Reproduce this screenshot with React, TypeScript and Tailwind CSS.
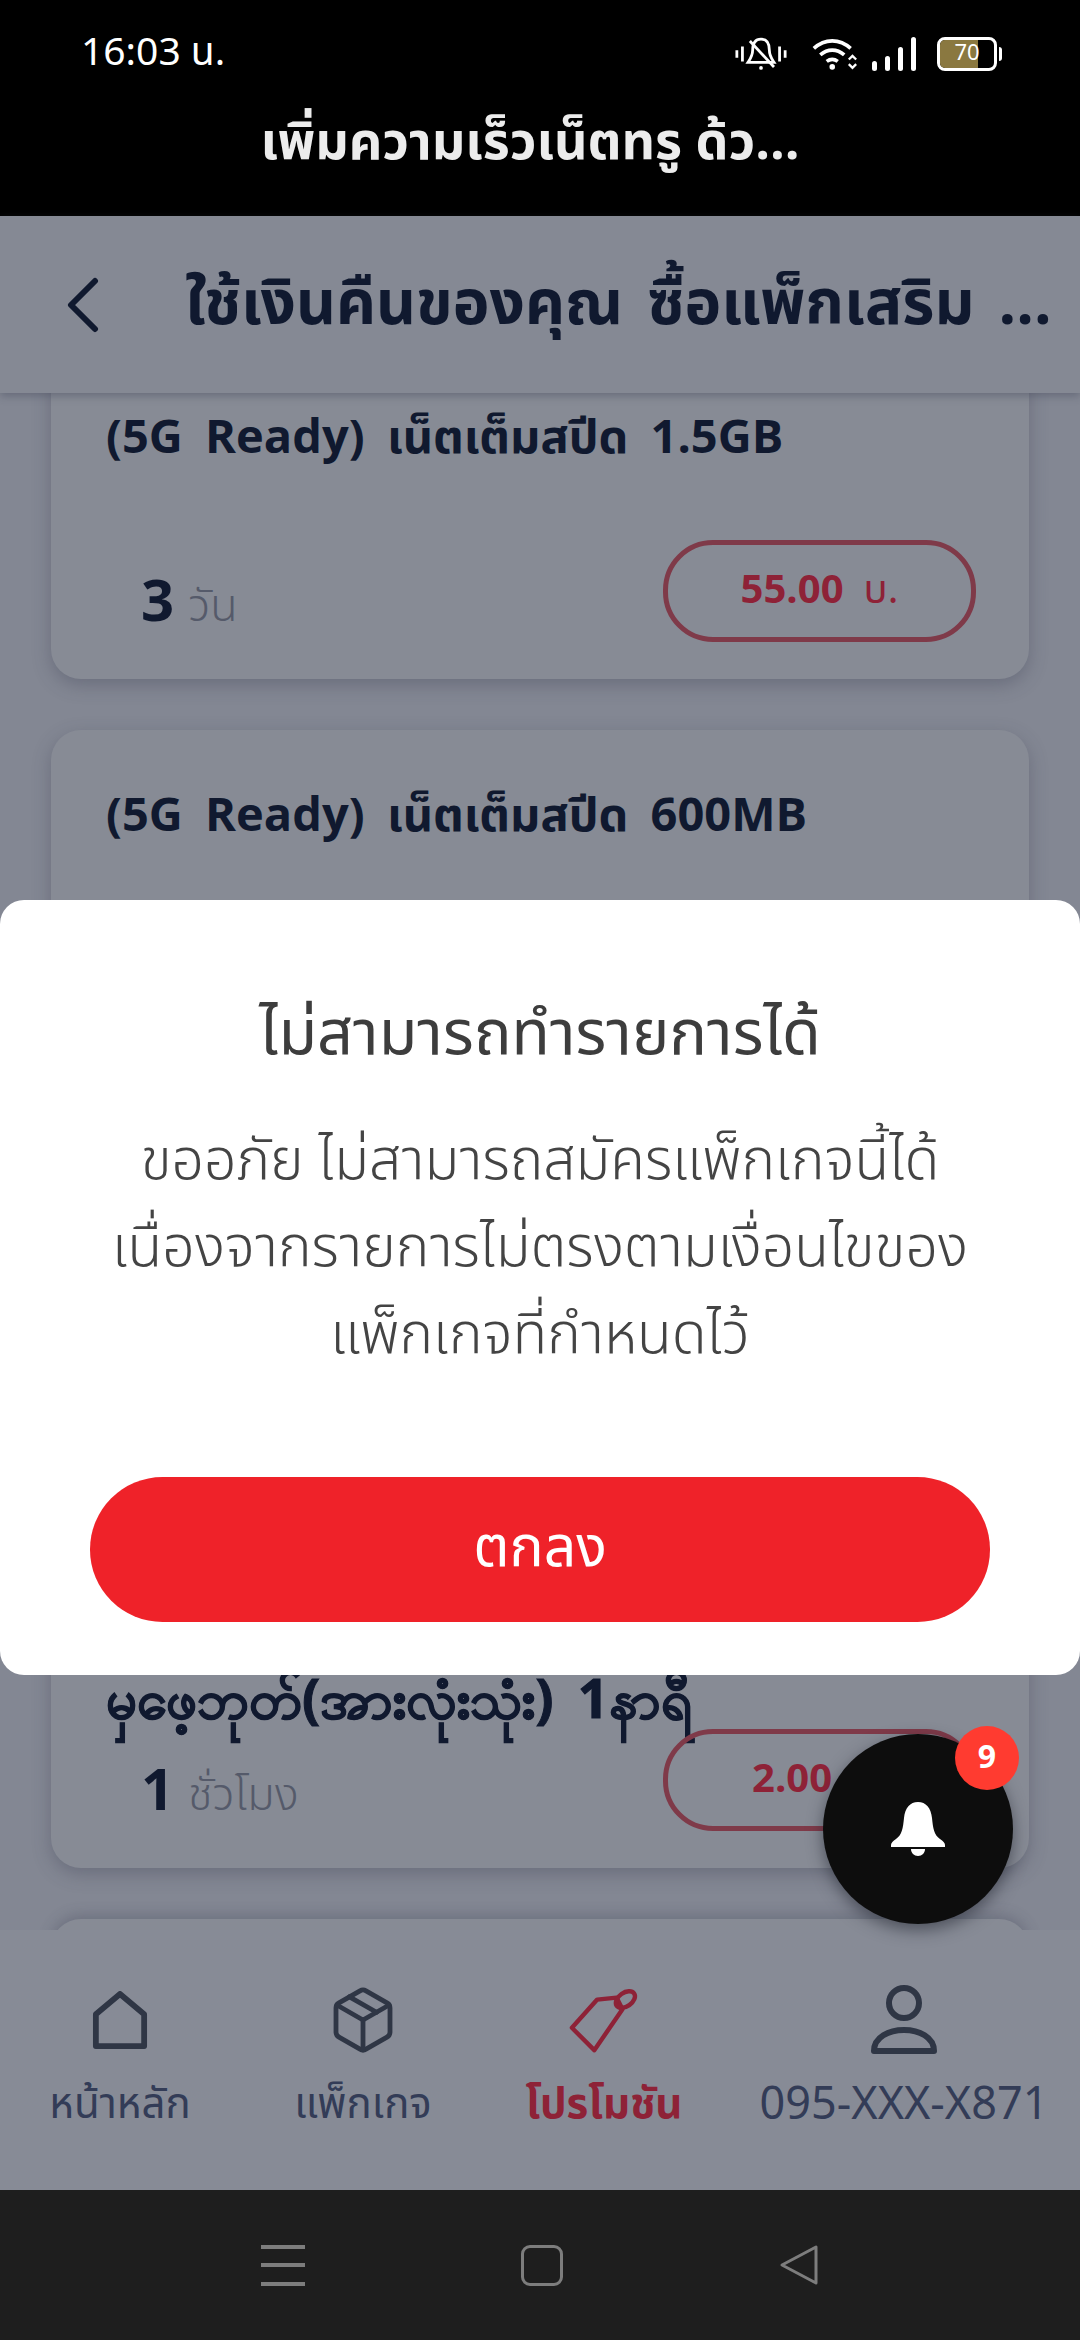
import React from 'react';
import { Package } from 'lucide-react';

const thai = 'font-["Noto_Sans_Thai","Noto_Sans","Open_Sans","Liberation_Sans",sans-serif]';

const PlanCard = ({ title, qty, unit, price, className = '', titleClassName = 'text-[47px]' }: { title: string; qty: string; unit: string; price: string; className?: string; titleClassName?: string }) => (
    <div className={`flex flex-col rounded-[30px] bg-[#878b95] pl-[55px] pr-[53px] pb-[37px] pt-[60px] shadow-[0_6px_18px_rgba(60,64,84,0.35)] ${className}`}>
        <div className={`leading-[54px] font-bold whitespace-nowrap text-[#10192f] [word-spacing:10px] ${titleClassName}`}>{title}</div>
        <div className="flex items-center justify-between">
            <div className="flex items-baseline gap-[14px] pl-[35px] pt-[24px]">
                <span className="text-[58px] leading-none font-bold text-[#10192f]">{qty}</span>
                <span className="text-[45px] leading-none font-light text-[#555a6a]">{unit}</span>
            </div>
            <div className="flex h-[102px] w-[313px] items-center justify-center gap-[20px] rounded-[50px] border-[5px] border-[#7f3a49] text-[40px] font-bold text-[#8e2237]">
                <span>{price}</span>
                <span className="font-normal">บ.</span>
            </div>
        </div>
    </div>
);

const NavItem = ({ label, icon, active = false, className = '' }: { label: string; icon: React.ReactNode; active?: boolean; className?: string }) => (
    <div className={`flex flex-col items-center ${className}`}>
        <div className="flex h-[72px] items-center justify-center">{icon}</div>
        <span className={`mt-[21px] text-[42px] leading-[56px] whitespace-nowrap ${active ? 'font-bold text-[#8e2237]' : 'text-[#333c57]'}`}>{label}</span>
    </div>
);

export default function App() {
    return (
        <div className={`relative flex h-[2340px] w-[1080px] flex-col overflow-hidden bg-[#838793] ${thai}`}>
            {/* status bar + app title */}
            <div className="flex h-[216px] shrink-0 flex-col bg-black text-white">
                <div className="flex h-[108px] items-center justify-between pl-[81px] pr-[78px]">
                    <span className="text-[39px] font-normal">16:03 น.</span>
                    <div className="flex items-center">
                        <svg width="52" height="40" viewBox="0 0 56 40" fill="none" stroke="white" strokeWidth="3">
                            <path d="M2 16v8M8 12v16M48 12v16M54 16v8" />
                            <path d="M28 4c-7 0-9 6-9 12 0 6-3 10-5 13h28c-2-3-5-7-5-13 0-6-2-12-9-12z" />
                            <path d="M16 6l26 28" />
                            <circle cx="28" cy="35" r="2" fill="white" stroke="none" />
                        </svg>
                        <svg className="ml-[25px]" width="46" height="36" viewBox="0 0 50 36" fill="none" stroke="white" strokeWidth="4">
                            <path d="M2 12c12-11 28-11 40 0M9 19c8-7 18-7 26 0M16 26c4-3 8-3 12 0" />
                            <circle cx="22" cy="32" r="3" fill="white" stroke="none" />
                            <path d="M40 24l4-4 4 4M40 29l4 4 4-4" strokeWidth="2.5" />
                        </svg>
                        <div className="ml-[14px] flex h-[34px] items-end gap-[8px]">
                            <span className="h-[10px] w-[5px] rounded-sm bg-white" />
                            <span className="h-[15px] w-[5px] rounded-sm bg-white" />
                            <span className="h-[24px] w-[5px] rounded-sm bg-white" />
                            <span className="h-[34px] w-[5px] rounded-sm bg-white" />
                        </div>
                        <div className="ml-[21px] flex items-center gap-[2px]">
                            <div className="relative h-[34px] w-[60px] overflow-hidden rounded-[8px] border-[3px] border-white">
                                <div className="h-full w-[70%] bg-[#8a7840]" />
                                <span className="absolute inset-0 flex items-center justify-center text-[22px] leading-none">70</span>
                            </div>
                            <span className="h-[14px] w-[3px] rounded-r bg-white" />
                        </div>
                    </div>
                </div>
                <div className="mt-[7px] pr-[20px] text-center text-[52px] leading-[56px] font-bold whitespace-nowrap text-[#ececec]">เพิ่มความเร็วเน็ตทรู ด้ว...</div>
            </div>

            {/* page header */}
            <div className="relative z-10 flex h-[177px] shrink-0 items-center bg-[#858994] pl-[66px] shadow-[0_3px_8px_rgba(60,64,84,0.4)]">
                <svg className="shrink-0" width="34" height="56" viewBox="0 0 34 56" fill="none" stroke="#10192f" strokeWidth="6" strokeLinecap="round" strokeLinejoin="round">
                    <path d="M29 4L5 28l24 24" />
                </svg>
                <div className="ml-[85px] text-[62px] leading-[72px] font-bold whitespace-nowrap text-[#10192f] [word-spacing:8px]">ใช้เงินคืนของคุณ ซื้อแพ็กเสริม ...</div>
            </div>

            {/* list, scrolled behind the header */}
            <div className="flex flex-1 flex-col gap-[51px] overflow-hidden px-[51px] -mt-[41px]">
                <PlanCard className="h-[327px] shrink-0 justify-between" title="(5G Ready) เน็ตเต็มสปีด 1.5GB" qty="3" unit="วัน" price="55.00" />
                <PlanCard className="h-[327px] shrink-0 justify-between" title="(5G Ready) เน็ตเต็มสปีด 600MB" qty="1" unit="วัน" price="25.00" />
                <div className="h-[327px] shrink-0 rounded-[30px] bg-[#878b95]" />
                <PlanCard className="h-[382px] shrink-0 justify-end" titleClassName="text-[54px] [-webkit-text-stroke:1px_#10192f]" title="မှဖေ့ဘုတ်(အားလုံးသုံး) 1နာရီ" qty="1" unit="ชั่วโมง" price="2.00" />
                <div className="h-[327px] shrink-0 rounded-[30px] bg-[#878b95] shadow-[0_-4px_14px_rgba(60,64,84,0.3)]" />
            </div>

            {/* bottom nav */}
            <div className="relative z-10 flex h-[260px] shrink-0 items-start bg-[#878b96] pt-[54px]">
                <NavItem className="w-[240px]" label="หน้าหลัก" icon={
                    <svg width="56" height="58" viewBox="0 0 58 60" fill="none" stroke="#2f3645" strokeWidth="6" strokeLinejoin="round">
                        <path d="M4 24L29 3l25 21v33H4z" />
                    </svg>
                } />
                <NavItem className="w-[246px]" label="แพ็กเกจ" icon={<Package size={72} color="#2f3645" strokeWidth={1.6} />} />
                <NavItem className="w-[236px]" label="โปรโมชัน" active icon={
                    <svg width="70" height="68" viewBox="0 0 72 68" fill="none" stroke="#8e2237" strokeWidth="4.5" strokeLinejoin="round" strokeLinecap="round">
                        <path d="M3 42L29 13l20-2 6 12-29 42z" />
                        <ellipse cx="58" cy="13" rx="11" ry="7" transform="rotate(-35 58 13)" />
                    </svg>
                } />
                <div className="flex flex-1 flex-col items-center pl-[6px]">
                    <div className="flex h-[72px] items-center justify-center">
                        <svg width="68" height="70" viewBox="0 0 68 70" fill="none" stroke="#2f3645" strokeWidth="6">
                            <circle cx="34" cy="18" r="15" />
                            <path d="M4 66c0-28 60-28 60 0z" strokeLinejoin="round" />
                        </svg>
                    </div>
                    <span className="mt-[21px] text-[45px] leading-[56px] whitespace-nowrap text-[#333c57]">095-XXX-X871</span>
                </div>
            </div>

            {/* system nav */}
            <div className="relative z-10 flex h-[150px] shrink-0 items-center justify-center gap-[216px] bg-[#1e1e1e]">
                <div className="flex h-[41px] w-[44px] flex-col justify-between">
                    <span className="h-[4px] bg-[#7d7d7d]" />
                    <span className="h-[4px] bg-[#7d7d7d]" />
                    <span className="h-[4px] bg-[#7d7d7d]" />
                </div>
                <div className="h-[41px] w-[42px] rounded-[9px] border-[3px] border-[#7d7d7d]" />
                <svg width="40" height="42" viewBox="0 0 40 42" fill="none" stroke="#7d7d7d" strokeWidth="3" strokeLinejoin="round">
                    <path d="M37 3v36L3 21z" />
                </svg>
            </div>

            {/* error dialog */}
            <div className="absolute inset-x-0 top-[900px] z-20 flex h-[775px] flex-col items-center rounded-[24px] bg-white px-[90px] pt-[95px]">
                <div className="text-[63px] leading-[80px] whitespace-nowrap text-[#3d3d3d]">ไม่สามารถทำรายการได้</div>
                <div className="mt-[44px] text-center text-[57px] leading-[87px] font-light whitespace-nowrap text-[#444]">
                    ขออภัย ไม่สามารถสมัครแพ็กเกจนี้ได้<br />เนื่องจากรายการไม่ตรงตามเงื่อนไขของ<br />แพ็กเกจที่กำหนดไว้
                </div>
                <button className="mt-auto mb-[53px] flex h-[145px] w-[900px] items-center justify-center rounded-full bg-[#ef2229] text-[57px] leading-none text-white">ตกลง</button>
            </div>

            {/* notification button */}
            <div className="absolute left-[823px] top-[1734px] z-20 flex h-[190px] w-[190px] items-center justify-center rounded-full bg-[#0d0d0d] shadow-[0_6px_16px_rgba(30,32,44,0.55)]">
                <svg width="54" height="54" viewBox="0 0 54 54" fill="white">
                    <path d="M27 0c-8 0-13 6-14 16-1 10-2 17-8 21-3 2-5 4-5 6v2h54v-2c0-2-2-4-5-6-6-4-7-11-8-21C40 6 35 0 27 0z" />
                    <path d="M20 47h14c0 4-3 7-7 7s-7-3-7-7z" />
                </svg>
                <div className="absolute left-[132px] top-[-8px] flex h-[64px] w-[64px] items-center justify-center rounded-full bg-[#ff3b30] text-[32px] font-bold text-white">9</div>
            </div>
        </div>
    );
}
